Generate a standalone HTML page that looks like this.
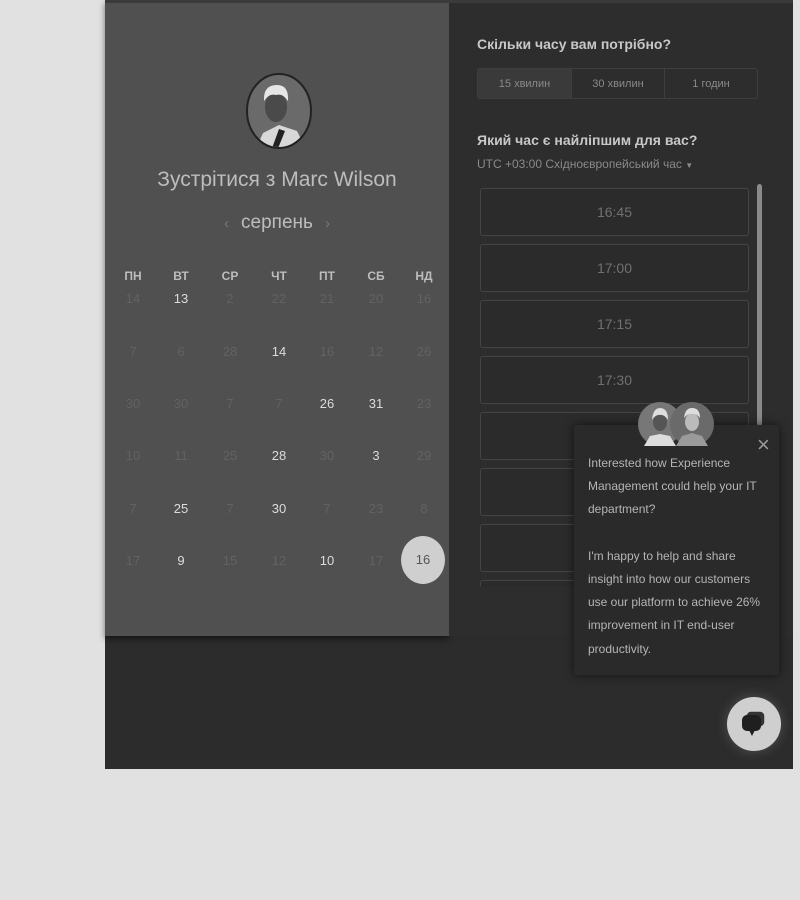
<!DOCTYPE html>
<html><head><meta charset="utf-8"><style>
*{margin:0;padding:0;box-sizing:border-box}
body{width:800px;height:900px;background:#e1e1e1;position:relative;overflow:hidden;font-family:"Liberation Sans","DejaVu Sans",sans-serif}
.a{position:absolute}
#wrap{left:105px;top:0;width:688px;height:769px;background:#2c2c2c}
#left{left:105px;top:0;width:344px;height:636px;background:#505050;box-shadow:0 3px 6px rgba(0,0,0,.5)}
#right{left:449px;top:0;width:344px;height:636px;background:#2d2d2d}
.d{position:absolute;width:40px;margin-left:-20px;text-align:center;font-size:13px;color:#626262}
.d.b{color:#dcdcdc}
.h{position:absolute;width:40px;margin-left:-20px;text-align:center;font-size:12px;font-weight:bold;color:#bdbdbd}
.slot{position:absolute;left:480px;width:269px;height:48px;border:1px solid #444;border-radius:3px;background:#2b2b2b;color:#707070;font-size:14px;text-align:center;line-height:46px}
.seg{position:absolute;top:68px;height:31px;font-size:11px;color:#8a8a8a;text-align:center;line-height:30px;border:1px solid #3e3e3e}
</style></head><body>
<div class="a" id="wrap"></div>
<div class="a" id="left"></div>
<div class="a" id="right"></div>
<div class="a" style="left:105px;top:0;width:688px;height:3px;background:#3a3a3a"></div>

<svg class="a" style="left:245px;top:73px" width="68" height="78" viewBox="0 0 68 78">
<defs><clipPath id="c"><ellipse cx="34" cy="38" rx="31" ry="36"/></clipPath></defs>
<ellipse cx="34" cy="38" rx="32" ry="37" fill="#6a6a6a" stroke="#222" stroke-width="2"/>
<g clip-path="url(#c)">
<path d="M10 78 L18 60 L34 52 L52 58 L62 78Z" fill="#d8d8d8"/>
<path d="M26 78 L34 56 L40 58 L32 78Z" fill="#222"/>
<ellipse cx="31" cy="34" rx="11" ry="15" fill="#4a4a4a"/>
<path d="M19 28 Q18 12 32 12 Q44 12 43 28 Q38 20 31 22 Q24 20 19 28Z" fill="#e6e6e6"/>
</g></svg>

<div class="a" style="left:105px;top:168px;width:344px;text-align:center;font-size:21px;color:#bdbdbd">Зустрітися з Marc Wilson</div>
<div class="a" style="left:105px;top:212px;width:344px;text-align:center;font-size:19px;color:#bdbdbd"><span style="color:#777;font-size:15px;margin-right:12px">‹</span>серпень<span style="color:#777;font-size:15px;margin-left:12px">›</span></div>

<div class="h" style="left:133px;top:269px">ПН</div><div class="h" style="left:181px;top:269px">ВТ</div><div class="h" style="left:230px;top:269px">СР</div><div class="h" style="left:279px;top:269px">ЧТ</div><div class="h" style="left:327px;top:269px">ПТ</div><div class="h" style="left:376px;top:269px">СБ</div><div class="h" style="left:424px;top:269px">НД</div>

<div class="d" style="left:133px;top:291px">14</div><div class="d b" style="left:181px;top:291px">13</div><div class="d" style="left:230px;top:291px">2</div><div class="d" style="left:279px;top:291px">22</div><div class="d" style="left:327px;top:291px">21</div><div class="d" style="left:376px;top:291px">20</div><div class="d" style="left:424px;top:291px">16</div>
<div class="d" style="left:133px;top:344px">7</div><div class="d" style="left:181px;top:344px">6</div><div class="d" style="left:230px;top:344px">28</div><div class="d b" style="left:279px;top:344px">14</div><div class="d" style="left:327px;top:344px">16</div><div class="d" style="left:376px;top:344px">12</div><div class="d" style="left:424px;top:344px">26</div>
<div class="d" style="left:133px;top:396px">30</div><div class="d" style="left:181px;top:396px">30</div><div class="d" style="left:230px;top:396px">7</div><div class="d" style="left:279px;top:396px">7</div><div class="d b" style="left:327px;top:396px">26</div><div class="d b" style="left:376px;top:396px">31</div><div class="d" style="left:424px;top:396px">23</div>
<div class="d" style="left:133px;top:448px">10</div><div class="d" style="left:181px;top:448px">11</div><div class="d" style="left:230px;top:448px">25</div><div class="d b" style="left:279px;top:448px">28</div><div class="d" style="left:327px;top:448px">30</div><div class="d b" style="left:376px;top:448px">3</div><div class="d" style="left:424px;top:448px">29</div>
<div class="d" style="left:133px;top:501px">7</div><div class="d b" style="left:181px;top:501px">25</div><div class="d" style="left:230px;top:501px">7</div><div class="d b" style="left:279px;top:501px">30</div><div class="d" style="left:327px;top:501px">7</div><div class="d" style="left:376px;top:501px">23</div><div class="d" style="left:424px;top:501px">8</div>
<div class="d" style="left:133px;top:553px">17</div><div class="d b" style="left:181px;top:553px">9</div><div class="d" style="left:230px;top:553px">15</div><div class="d" style="left:279px;top:553px">12</div><div class="d b" style="left:327px;top:553px">10</div><div class="d" style="left:376px;top:553px">17</div>
<div class="a" style="left:401px;top:536px;width:44px;height:48px;border-radius:50%;background:#cfcfcf;color:#555;font-size:13px;text-align:center;line-height:48px">16</div>

<div class="a" style="left:477px;top:36px;font-size:14px;font-weight:bold;color:#c8c8c8">Скільки часу вам потрібно?</div>
<div class="seg" style="left:477px;width:95px;background:#3a3a3a;border-radius:3px 0 0 3px">15 хвилин</div>
<div class="seg" style="left:571px;width:94px">30 хвилин</div>
<div class="seg" style="left:664px;width:94px;border-radius:0 3px 3px 0">1 годин</div>
<div class="a" style="left:477px;top:132px;font-size:14px;font-weight:bold;color:#c8c8c8">Який час є найліпшим для вас?</div>
<div class="a" style="left:477px;top:157px;font-size:12px;color:#8a8a8a">UTC +03:00 Східноєвропейський час <span style="font-size:8px">▼</span></div>

<div class="a" style="left:474px;top:184px;width:280px;height:402px;overflow:hidden">
<div class="slot" style="left:6px;top:4px">16:45</div>
<div class="slot" style="left:6px;top:60px">17:00</div>
<div class="slot" style="left:6px;top:116px">17:15</div>
<div class="slot" style="left:6px;top:172px">17:30</div>
<div class="slot" style="left:6px;top:228px"></div>
<div class="slot" style="left:6px;top:284px"></div>
<div class="slot" style="left:6px;top:340px"></div>
<div class="slot" style="left:6px;top:396px"></div>
</div>
<div class="a" style="left:757px;top:184px;width:5px;height:242px;border-radius:3px;background:#8a8a8a"></div>

<div class="a" style="left:574px;top:425px;width:205px;height:250px;background:#2a2a2a;border-radius:3px;box-shadow:0 0 10px rgba(0,0,0,.6)"></div>
<div class="a" style="left:757px;top:436px;color:#999;font-size:22px;line-height:18px;font-weight:300">×</div>
<div class="a" style="left:588px;top:452px;width:176px;font-size:12px;line-height:23.2px;color:#b5b5b5">Interested how Experience Management could help your IT department?<br><br>I'm happy to help and share insight into how our customers use our platform to achieve 26% improvement in IT end-user productivity.</div>

<svg class="a" style="left:636px;top:400px" width="80" height="50">
<circle cx="24" cy="24" r="22" fill="#777"/>
<path d="M8 46 L14 36 L24 34 L34 36 L40 46Z" fill="#ddd"/>
<ellipse cx="24" cy="22" rx="7" ry="9" fill="#555"/><path d="M16 20 Q17 8 24 8 Q32 8 32 20 Q28 14 24 15 Q20 14 16 20Z" fill="#ddd"/>
<circle cx="56" cy="24" r="22" fill="#6a6a6a"/>
<path d="M40 46 L46 36 L56 33 L66 36 L72 46Z" fill="#9a9a9a"/>
<ellipse cx="56" cy="22" rx="7" ry="9" fill="#bbb"/><path d="M48 18 Q49 8 56 8 Q64 8 64 18 Q60 13 56 14 Q52 13 48 18Z" fill="#ddd"/>
</svg>

<div class="a" style="left:727px;top:697px;width:54px;height:54px;border-radius:50%;background:#cfcfcf;box-shadow:0 0 12px rgba(200,200,200,.25)"></div>
<svg class="a" style="left:738px;top:708px" width="32" height="32" viewBox="0 0 32 32">
<rect x="8" y="3" width="19" height="16" rx="5" fill="#333" stroke="#cfcfcf" stroke-width="1.5"/>
<rect x="4" y="7" width="19" height="16" rx="5" fill="#1f1f1f"/>
<path d="M11 22 L14 28 L17 22Z" fill="#1f1f1f"/>
</svg>
</body></html>
